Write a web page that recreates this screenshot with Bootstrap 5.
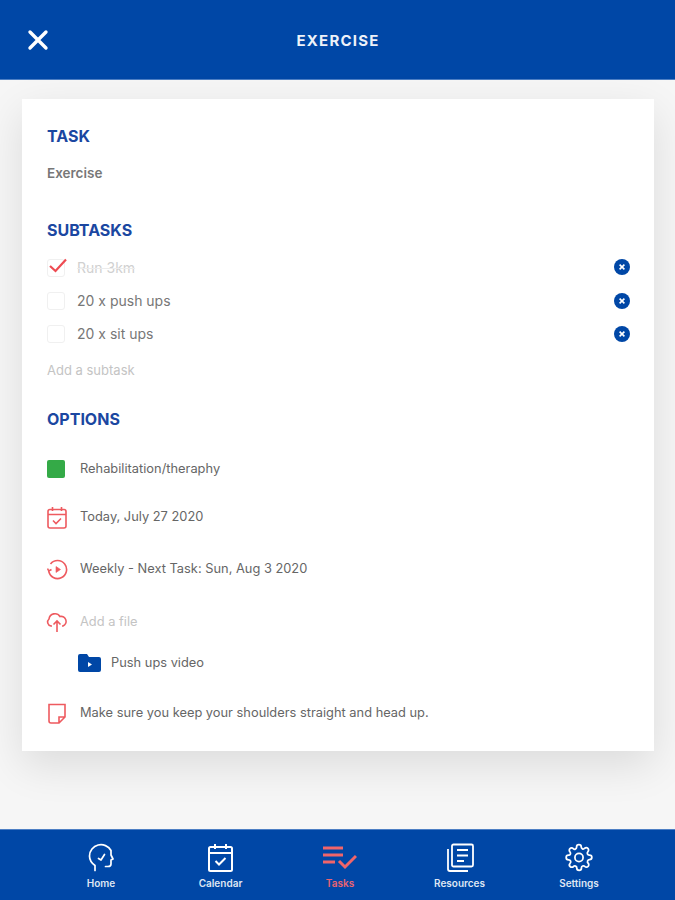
<!DOCTYPE html>
<html lang="en">
<head>
  <meta charset="utf-8">
  <title>Exercise</title>
  <link href="https://cdn.jsdelivr.net/npm/bootstrap@5.3.0/dist/css/bootstrap.min.css" rel="stylesheet">
  <style>
    body { background-color: #f6f6f6; height: 900px; overflow: hidden; font-family: "Inter", "Liberation Sans", sans-serif; color: #555; }
    .app-shell { height: 900px; }
    .top-bar { height: 80px; background-color: #0047a6; border-bottom: 1px solid #4d7fc4; padding: 0 27px; }
    .top-title { color: #eef2f9; font-weight: 700; font-size: 15px; letter-spacing: 1.2px; width: 100%; text-align: center; margin-left: -21px; padding-top: 4px; }
    .page-area { padding: 19px 21px 0 22px; }
    .sheet { background: #fff; height: 652px; padding: 27px 24px 0 25px; box-shadow: 0 14px 40px rgba(0,0,0,.11); }
    .sect-title { color: #1b47a1; font-size: 16px; font-weight: 700; line-height: 20px; margin: 0; }
    .sect-sub { margin-top: 38px; }
    .sect-opt { margin-top: 30px; }
    .task-name { font-size: 13.5px; font-weight: 600; color: #777; line-height: 18px; margin-top: 18px; }
    .sub-list { margin-top: 11px; }
    .sub-row { height: 33px; font-size: 14px; color: #777; }
    .sub-done { color: #d0d0d0; }
    .sub-done s { text-decoration-color: #ececec; }
    .tick-box { width: 18px; height: 18px; border: 1px solid #f0f0f0; border-radius: 3px; margin-right: 12px; position: relative; flex-shrink: 0; }
    .tick-box svg { position: absolute; left: 0; top: -4px; }
    .remove-icon { margin-top: -1px; }
    .add-link { font-size: 13px; color: #c4c4c4; line-height: 18px; margin-top: 11px; }
    .opt-row { font-size: 12.85px; color: #666; height: 24px; }
    .opt-color { margin-top: 28px; }
    .opt-date { margin-top: 24px; }
    .opt-repeat { margin-top: 28px; }
    .opt-file { margin-top: 29px; color: #c4c4c4; }
    .opt-video { margin-top: 17px; padding-left: 31px; }
    .opt-note { margin-top: 26px; }
    .opt-icon { width: 33px; flex-shrink: 0; display: flex; align-items: center; }
    .folder-icon { margin-right: 10px; flex-shrink: 0; }
    .icon-cloud { margin-left: -1px; }
    .icon-note { margin-left: 1px; }
    .green-swatch { width: 18px; height: 18px; background: #34aa47; border-radius: 2px; display: block; }
    .nav-foot { height: 71px; background-color: #0047a6; border-top: 1px solid #4d7fc4; padding-top: 13px; padding-left: 5px; }
    .nav-item-app { width: 119.5px; color: #dfe6f3; font-size: 10px; font-weight: 600; line-height: 12px; }
    .nav-item-app svg { display: block; margin: 0 auto 5px; }
    .nav-active { color: #ea6470; }
  </style>
</head>
<body>
  <div class="app-shell d-flex flex-column">
    <!-- header -->
    <div class="top-bar d-flex align-items-center">
      <svg width="22" height="22" viewBox="0 0 22 22" fill="none" stroke="#fff" stroke-width="3.4" stroke-linecap="round"><path d="M3 3 19 19M19 3 3 19"/></svg>
      <div class="top-title">EXERCISE</div>
    </div>

    <div class="page-area flex-grow-1">
      <div class="sheet">
        <h2 class="sect-title">TASK</h2>
        <div class="task-name">Exercise</div>

        <h2 class="sect-title sect-sub">SUBTASKS</h2>
        <div class="sub-list">
          <div class="sub-row sub-done d-flex align-items-center">
            <span class="tick-box"><svg width="20" height="20" viewBox="0 0 20 20" fill="none" stroke="#ee4b52" stroke-width="2.2"><path d="M2 10 7.500 15 18 3.500"/></svg></span>
            <span class="flex-grow-1"><s>Run 3km</s></span>
            <svg class="remove-icon" width="16" height="16" viewBox="0 0 16 16"><circle cx="8" cy="8" r="8" fill="#0047a6"/><path d="M5.600 5.600 10.400 10.400M10.400 5.600 5.600 10.400" stroke="#fff" stroke-width="1.600"/></svg>
          </div>
          <div class="sub-row d-flex align-items-center">
            <span class="tick-box"></span>
            <span class="flex-grow-1">20 x push ups</span>
            <svg width="16" height="16" viewBox="0 0 16 16"><circle cx="8" cy="8" r="8" fill="#0047a6"/><path d="M5.600 5.600 10.400 10.400M10.400 5.600 5.600 10.400" stroke="#fff" stroke-width="1.600"/></svg>
          </div>
          <div class="sub-row d-flex align-items-center">
            <span class="tick-box"></span>
            <span class="flex-grow-1">20 x sit ups</span>
            <svg width="16" height="16" viewBox="0 0 16 16"><circle cx="8" cy="8" r="8" fill="#0047a6"/><path d="M5.600 5.600 10.400 10.400M10.400 5.600 5.600 10.400" stroke="#fff" stroke-width="1.600"/></svg>
          </div>
        </div>
        <div class="add-link">Add a subtask</div>

        <h2 class="sect-title sect-opt">OPTIONS</h2>

        <div class="opt-row opt-color d-flex align-items-center">
          <span class="opt-icon"><span class="green-swatch"></span></span>
          <span>Rehabilitation/theraphy</span>
        </div>
        <div class="opt-row opt-date d-flex align-items-center">
          <span class="opt-icon"><svg width="20" height="23" viewBox="0 0 20 23" fill="none" stroke="#ee5a5f" stroke-width="1.600"><rect x="1" y="3.500" width="18" height="18.500" rx="2"/><path d="M1 8.500H19M5.500 1V5M14.500 1V5M6 14.500 9 17.500 14 12.500"/></svg></span>
          <span>Today, July 27 2020</span>
        </div>
        <div class="opt-row opt-repeat d-flex align-items-center">
          <span class="opt-icon"><svg width="21" height="21" viewBox="0 0 21 21" fill="none" stroke="#ee5a5f" stroke-width="1.600"><path d="M3.500 5A9 9 0 1 1 1.700 12M.5 9.500 1.800 12 4.500 10.500"/><path d="M9 7.500 13.500 10.500 9 13.500Z" fill="#ee5a5f" stroke-width=".6"/></svg></span>
          <span>Weekly - Next Task: Sun, Aug 3 2020</span>
        </div>
        <div class="opt-row opt-file d-flex align-items-center">
          <span class="opt-icon"><svg class="icon-cloud" width="22" height="21" viewBox="0 0 22 21" fill="none" stroke="#ee5a5f" stroke-width="1.600"><path d="M6 14H5A4 4 0 0 1 3 7 6 6 0 0 1 14 4.500 5 5 0 0 1 17 14H16M11 20V9M7.500 12.500 11 9 14.500 12.500"/></svg></span>
          <span>Add a file</span>
        </div>
        <div class="opt-row opt-video d-flex align-items-center">
          <svg class="folder-icon" width="23" height="18" viewBox="0 0 23 18"><path d="M0 2Q0 0 2 0H9L11 3H21Q23 3 23 5V16Q23 18 21 18H2Q0 18 0 16Z" fill="#0047a6"/><path d="M10 8 14 10.500 10 13Z" fill="#fff"/></svg>
          <span>Push ups video</span>
        </div>
        <div class="opt-row opt-note d-flex align-items-center">
          <span class="opt-icon"><svg class="icon-note" width="19" height="21" viewBox="0 0 19 21" fill="none" stroke="#ee5a5f" stroke-width="1.600"><path d="M1 1.500H17V14L11 20H3Q1 20 1 18ZM17 14H11V20"/></svg></span>
          <span>Make sure you keep your shoulders straight and head up.</span>
        </div>
      </div>
    </div>

    <!-- bottom nav -->
    <nav class="nav-foot d-flex justify-content-center text-center">
      <div class="nav-item-app">
        <svg width="26" height="29" viewBox="0 0 26 29" fill="none" stroke="#fff" stroke-width="1.700" stroke-linecap="round" stroke-linejoin="round"><path d="M7 27.500V22.500C3.500 20 1.500 17 1.500 13A11.500 11.500 0 0 1 23 7.500V12L25 16 23 17V21Q23 23.500 20 23.500H17.500"/><path d="M10.500 15.500 13 17 16.500 11.500"/></svg>
        Home
      </div>
      <div class="nav-item-app">
        <svg width="25" height="29" viewBox="0 0 25 29" fill="none" stroke="#fff" stroke-width="2"><rect x="1" y="4" width="23" height="24" rx="1.500"/><path d="M1 10H24M7 1V6M18 1V6M7.500 18 11 21.500 17.500 15"/></svg>
        Calendar
      </div>
      <div class="nav-item-app nav-active">
        <svg width="34" height="29" viewBox="0 0 34 29" fill="none" stroke="#f0656a" stroke-width="3"><path d="M0 5H20M0 12H20M0 19H12M16 18 22 24 33 13"/></svg>
        Tasks
      </div>
      <div class="nav-item-app">
        <svg width="28" height="29" viewBox="0 0 28 29" fill="none" stroke="#fff" stroke-width="1.800"><rect x="6" y="1.500" width="21" height="22" rx="1.500"/><path d="M2 6V26Q2 28 4 28H22M11 7H22M11 12.500H22M11 18H18"/></svg>
        Resources
      </div>
      <div class="nav-item-app">
        <svg width="28" height="29" viewBox="0 0 24 24" fill="none" stroke="#fff" stroke-width="1.500" stroke-linejoin="round"><circle cx="12" cy="12" r="3.500"/><path d="M19.400 15a1.650 1.650 0 0 0 .33 1.820l.06.06a2 2 0 1 1-2.830 2.830l-.06-.06a1.650 1.650 0 0 0-2.800 1.170V21a2 2 0 0 1-4 0v-.09A1.650 1.650 0 0 0 7.300 19.700l-.06.06a2 2 0 1 1-2.830-2.830l.06-.06a1.650 1.650 0 0 0-1.170-2.800H3a2 2 0 0 1 0-4h.09A1.650 1.650 0 0 0 4.300 7.300l-.06-.06a2 2 0 1 1 2.830-2.830l.06.06a1.650 1.650 0 0 0 2.800-1.170V3a2 2 0 0 1 4 0v.09a1.650 1.650 0 0 0 2.800 1.170l.06-.06a2 2 0 1 1 2.830 2.830l-.06.06a1.650 1.650 0 0 0 1.170 2.800H21a2 2 0 0 1 0 4h-.09a1.650 1.650 0 0 0-1.510 1z"/></svg>
        Settings
      </div>
    </nav>
  </div>
  <script src="https://cdn.jsdelivr.net/npm/bootstrap@5.3.0/dist/js/bootstrap.bundle.min.js"></script>
</body>
</html>
